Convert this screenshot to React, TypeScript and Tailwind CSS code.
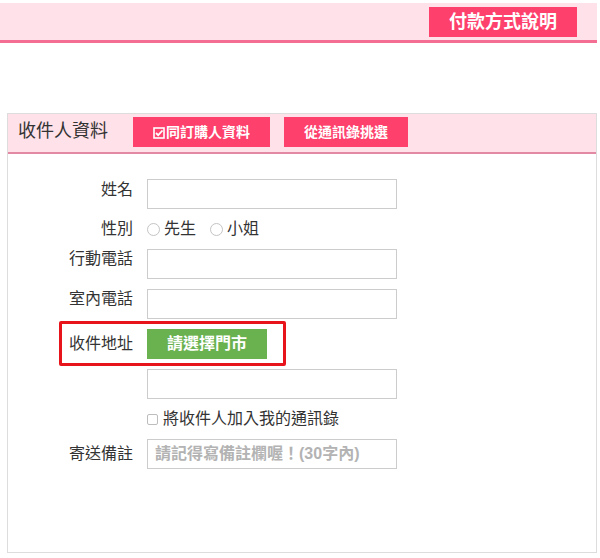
import { useState } from 'react';

function Label({ children, className = '' }: { children: React.ReactNode; className?: string }) {
  return (
    <div className={`w-[125px] flex-shrink-0 text-right text-[16px] text-[#333] leading-[18px] ${className}`}>
      {children}
    </div>
  );
}

function TextBox({ placeholder }: { placeholder?: string }) {
  return (
    <input
      type="text"
      placeholder={placeholder}
      className="w-[250px] h-[30px] border border-[#cccccc] bg-white px-[7px] text-[16px] outline-none placeholder:text-[#b3b3b3] placeholder:font-bold"
    />
  );
}

function Radio({ label, checked, onClick }: { label: string; checked: boolean; onClick: () => void }) {
  return (
    <button onClick={onClick} className="flex items-center gap-[4px] text-[16px] text-[#333]">
      <span className="w-[13px] h-[13px] rounded-full border border-[#c4c4c4] bg-white flex items-center justify-center">
        {checked && <span className="w-[6px] h-[6px] rounded-full bg-[#555]" />}
      </span>
      {label}
    </button>
  );
}

export default function App() {
  const [gender, setGender] = useState<'m' | 'f' | null>(null);
  const [addBook, setAddBook] = useState(false);

  return (
    <div className="w-[600px] h-[558px] bg-white font-['Liberation_Sans','Noto_Sans_CJK_TC',sans-serif]">
      {/* top bar */}
      <div className="pt-[3px] w-[597px]">
        <div className="h-[40px] bg-[#ffe1ea] border-b-[3px] border-[#f46d92] flex justify-end items-start pt-[4px] pr-[20px]">
          <button className="w-[148px] h-[30px] bg-[#fe416c] text-white text-[18px] font-bold leading-none flex items-center justify-center">
            付款方式說明
          </button>
        </div>
      </div>

      {/* recipient panel */}
      <div className="ml-[7px] mt-[70px] w-[590px] h-[440px] border border-[#dddddd]">
        <div className="h-[40px] bg-[#ffe1ea] border-b-[2px] border-[#e28aa4] flex items-start pl-[10px]">
          <div className="h-[34px] flex items-center text-[18px] text-[#333] w-[115px] pt-[1px]">收件人資料</div>
          <button className="mt-[3px] w-[137px] h-[30px] bg-[#fe416c] text-white text-[14px] font-bold flex items-center justify-center gap-[1px]">
            <svg width="12" height="12" viewBox="0 0 12 12" className="mt-[1px]">
              <rect x="1" y="1" width="10" height="10" fill="none" stroke="white" strokeWidth="1.6" />
              <path d="M3 6 L5.2 8.2 L9.5 3.5" fill="none" stroke="white" strokeWidth="1.8" />
            </svg>
            同訂購人資料
          </button>
          <button className="mt-[3px] ml-[14px] w-[124px] h-[30px] bg-[#fe416c] text-white text-[14px] font-bold flex items-center justify-center">
            從通訊錄挑選
          </button>
        </div>

        <div className="pt-[25px] flex flex-col gap-[10px]">
          <div className="flex items-start gap-[14px]">
            <Label className="pt-[2px]">姓名</Label>
            <TextBox />
          </div>

          <div className="flex items-center gap-[14px] h-[20px]">
            <Label>性別</Label>
            <div className="flex items-center gap-[14px]">
              <Radio label="先生" checked={gender === 'm'} onClick={() => setGender('m')} />
              <Radio label="小姐" checked={gender === 'f'} onClick={() => setGender('f')} />
            </div>
          </div>

          <div className="flex items-start gap-[14px]">
            <Label className="pt-[1px]">行動電話</Label>
            <TextBox />
          </div>

          <div className="flex items-start gap-[14px]">
            <Label className="pt-[1px]">室內電話</Label>
            <TextBox />
          </div>

          <div className="relative flex items-center gap-[14px] h-[30px]">
            <Label>收件地址</Label>
            <button className="w-[120px] h-[30px] bg-[#6ab150] text-white text-[16px] font-bold flex items-center justify-center">
              請選擇門市
            </button>
            <div className="absolute left-[51px] top-[-8px] w-[227px] h-[45px] border-[3px] border-[#e8141c] rounded-[2px] pointer-events-none" />
          </div>

          <div className="flex items-start gap-[14px]">
            <div className="w-[125px] flex-shrink-0" />
            <TextBox />
          </div>

          <div className="flex items-center gap-[14px] h-[20px]">
            <div className="w-[125px] flex-shrink-0" />
            <button onClick={() => setAddBook(!addBook)} className="flex items-center gap-[5px] text-[16px] text-[#333]">
              <span className="w-[11px] h-[11px] border border-[#bdbdbd] rounded-[2px] bg-white flex items-center justify-center text-[9px] leading-none">
                {addBook ? '✓' : ''}
              </span>
              將收件人加入我的通訊錄
            </button>
          </div>

          <div className="flex items-center gap-[14px]">
            <Label>寄送備註</Label>
            <TextBox placeholder="請記得寫備註欄喔！(30字內)" />
          </div>
        </div>
      </div>
    </div>
  );
}
